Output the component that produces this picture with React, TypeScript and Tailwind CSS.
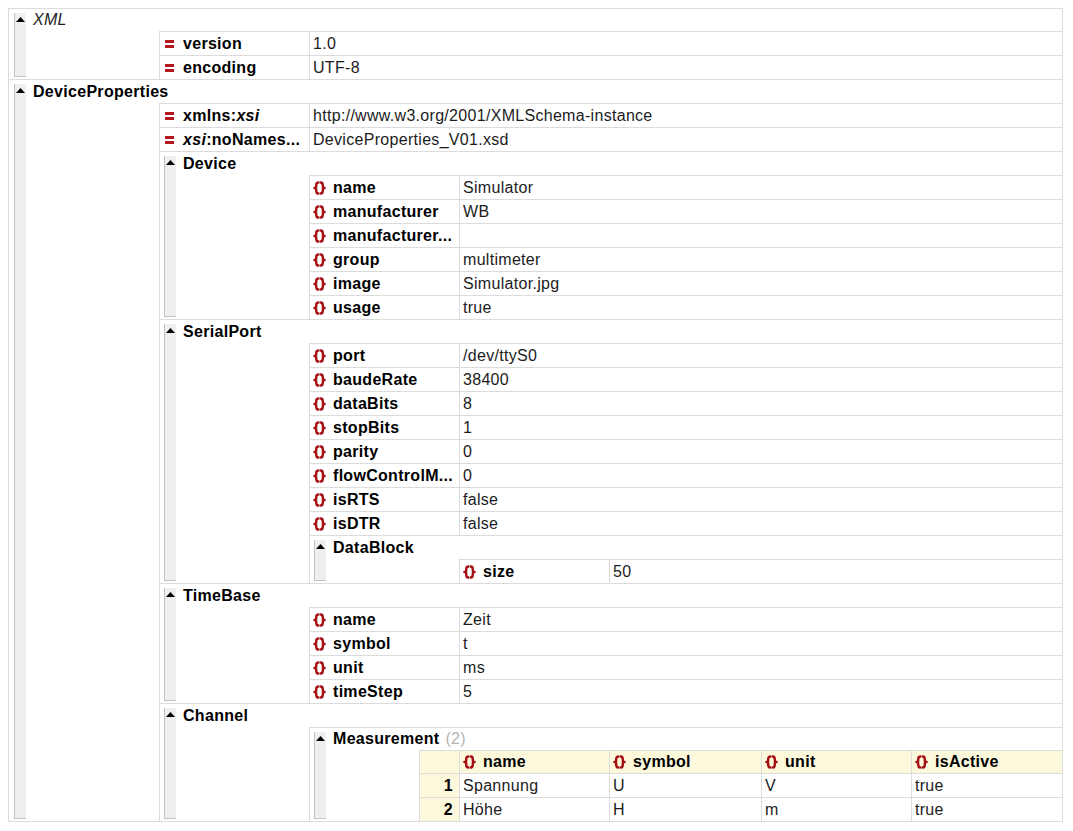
import React from "react";

const line = "border-[#dcdcdc]";

const AttrIcon = () => (
  <svg width="9" height="8" viewBox="0 0 9 8" className="shrink-0">
    <rect x="0" y="0" width="9" height="3" fill="#b3161b" />
    <rect x="0" y="5" width="9" height="3" fill="#b3161b" />
  </svg>
);

const ElIcon = () => (
  <svg width="13" height="14" viewBox="0 0 13 14" fill="none" stroke="#a50f14" strokeWidth="2.4" strokeLinecap="round" strokeLinejoin="round" className="shrink-0">
    <path d="M5.3 1.5C3.5 1.5 3.2 3 3.2 4.5v1C3.2 6.5 2.5 7 1.4 7c1.1 0 1.8.5 1.8 1.5v1c0 1.5.3 3 2.1 3" />
    <path d="M7.7 1.5c1.8 0 2.1 1.5 2.1 3v1c0 1 .7 1.5 1.8 1.5-1.1 0-1.8.5-1.8 1.5v1c0 1.5-.3 3-2.1 3" />
  </svg>
);

const Triangle = () => (
  <svg width="9" height="5" viewBox="0 0 9 5">
    <polygon points="0,5 4.5,0 9,5" fill="#000" />
  </svg>
);

type RowProps = { kind: "attr" | "el"; name: React.ReactNode; value?: string };

const Row = ({ kind, name, value }: RowProps) => (
  <div className={`flex h-[24px] border-t ${line}`}>
    <div className="w-[149px] shrink-0 flex items-center overflow-hidden">
      <div className={`w-[23px] shrink-0 flex items-center ${kind === "attr" ? "pl-[5px]" : "pl-[3px]"}`}>
        {kind === "attr" ? <AttrIcon /> : <ElIcon />}
      </div>
      <span className="font-bold whitespace-nowrap">{name}</span>
    </div>
    <div className={`flex-1 border-l ${line} pl-[3px] flex items-center whitespace-nowrap text-[#1c1c1c]`}>
      {value}
    </div>
  </div>
);

type BlockProps = {
  name: React.ReactNode;
  children: React.ReactNode;
  top?: boolean;
  headH?: string;
  indent?: string;
  plain?: boolean;
};

const Block = ({ name, children, top, headH = "h-[23px]", indent = "ml-[126px]", plain }: BlockProps) => (
  <div className={`flex border-t ${line}`}>
    <div className={`${top ? "w-[24px] pl-[5px]" : "w-[23px] pl-[4px]"} shrink-0 pt-[4px] pb-[2px] flex`}>
      <div className="w-[12px] bg-[#efeff2] border-l border-b border-[#c2c2c6] flex justify-center pt-[4px]">
        <div className="h-[5px] leading-none">
          <Triangle />
        </div>
      </div>
    </div>
    <div className="flex-1 min-w-0">
      <div className={`${headH} flex items-center whitespace-nowrap ${plain ? "italic text-[#222]" : "font-bold"}`}>
        {name}
      </div>
      <div className={`${indent} border-l ${line}`}>{children}</div>
    </div>
  </div>
);

const HCell = ({ w, name }: { w: string; name: string }) => (
  <div className={`${w} shrink-0 border-l ${line} flex items-center pl-[3px] gap-[7px]`}>
    <ElIcon />
    <span className="font-bold">{name}</span>
  </div>
);

const measurements = [
  { n: 1, name: "Spannung", symbol: "U", unit: "V", isActive: "true" },
  { n: 2, name: "Höhe", symbol: "H", unit: "m", isActive: "true" },
];

const MeasurementTable = () => (
  <div>
    <div className={`flex h-[23px] border-t ${line} bg-[#fcf8dc]`}>
      <div className="w-[39px] shrink-0" />
      <HCell w="w-[150px]" name="name" />
      <HCell w="w-[152px]" name="symbol" />
      <HCell w="w-[150px]" name="unit" />
      <div className={`flex-1 border-l ${line} flex items-center pl-[3px] gap-[7px]`}>
        <ElIcon />
        <span className="font-bold">isActive</span>
      </div>
    </div>
    {measurements.map((m) => (
      <div key={m.n} className={`flex h-[24px] border-t ${line}`}>
        <div className="w-[39px] shrink-0 bg-[#fcf8dc] flex items-center justify-end pr-[6px] font-bold">{m.n}</div>
        <div className={`w-[150px] shrink-0 border-l ${line} flex items-center pl-[3px] text-[#1c1c1c]`}>{m.name}</div>
        <div className={`w-[152px] shrink-0 border-l ${line} flex items-center pl-[3px] text-[#1c1c1c]`}>{m.symbol}</div>
        <div className={`w-[150px] shrink-0 border-l ${line} flex items-center pl-[3px] text-[#1c1c1c]`}>{m.unit}</div>
        <div className={`flex-1 border-l ${line} flex items-center pl-[3px] text-[#1c1c1c]`}>{m.isActive}</div>
      </div>
    ))}
  </div>
);

export default function App() {
  return (
    <div className="min-h-screen bg-white pt-[8px] pl-[8px] font-['Liberation_Sans',Arial,sans-serif] text-[16px] leading-none tracking-[0.3px] text-black">
      <div className={`w-[1055px] border-l border-r border-b ${line}`}>
        <Block top plain headH="h-[22px]" name="XML">
          <Row kind="attr" name="version" value="1.0" />
          <Row kind="attr" name="encoding" value="UTF-8" />
        </Block>
        <Block top name="DeviceProperties">
          <Row kind="attr" name={<>xmlns:<i>xsi</i></>} value="http://www.w3.org/2001/XMLSchema-instance" />
          <Row kind="attr" name={<><i>xsi</i>:noNames...</>} value="DeviceProperties_V01.xsd" />
          <Block name="Device">
            <Row kind="el" name="name" value="Simulator" />
            <Row kind="el" name="manufacturer" value="WB" />
            <Row kind="el" name="manufacturer..." value="" />
            <Row kind="el" name="group" value="multimeter" />
            <Row kind="el" name="image" value="Simulator.jpg" />
            <Row kind="el" name="usage" value="true" />
          </Block>
          <Block name="SerialPort">
            <Row kind="el" name="port" value="/dev/ttyS0" />
            <Row kind="el" name="baudeRate" value="38400" />
            <Row kind="el" name="dataBits" value="8" />
            <Row kind="el" name="stopBits" value="1" />
            <Row kind="el" name="parity" value="0" />
            <Row kind="el" name="flowControlM..." value="0" />
            <Row kind="el" name="isRTS" value="false" />
            <Row kind="el" name="isDTR" value="false" />
            <Block name="DataBlock">
              <Row kind="el" name="size" value="50" />
            </Block>
          </Block>
          <Block name="TimeBase">
            <Row kind="el" name="name" value="Zeit" />
            <Row kind="el" name="symbol" value="t" />
            <Row kind="el" name="unit" value="ms" />
            <Row kind="el" name="timeStep" value="5" />
          </Block>
          <Block name="Channel">
            <Block
              name={
                <>
                  Measurement<span className="font-normal text-[#b4b4b4] ml-[6px]">(2)</span>
                </>
              }
              headH="h-[22px]"
              indent="ml-[86px]"
            >
              <MeasurementTable />
            </Block>
          </Block>
        </Block>
      </div>
    </div>
  );
}
